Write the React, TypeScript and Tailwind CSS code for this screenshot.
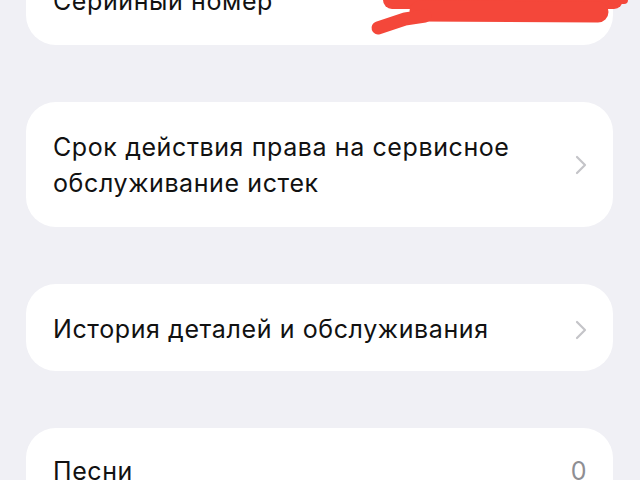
import React from 'react';

const font = { fontFamily: 'Inter, "Noto Sans", sans-serif' };

const Chevron: React.FC = () => (
  <svg width="12" height="20" viewBox="0 0 12 20" className="shrink-0">
    <path d="M2 2 L10 10 L2 18" fill="none" stroke="#c4c4c8" strokeWidth="2.2" strokeLinecap="round" strokeLinejoin="round" />
  </svg>
);

// red marker scribble covering the serial number
const Scribble: React.FC = () => (
  <svg className="absolute left-0 top-0" width="640" height="50" viewBox="0 0 640 50">
    <g fill="none" stroke="#f4473a" strokeLinecap="round" strokeLinejoin="round">
      <path d="M392 0 L614 0" strokeWidth="18" />
      <path d="M612 0 L624 0" strokeWidth="8" />
      <path d="M420 11 L598 12" strokeWidth="21" />
      <path d="M378 28 L405 19 L425 16" strokeWidth="13" />
    </g>
  </svg>
);

export default function App() {
  return (
    <div className="w-[640px] h-[480px] overflow-hidden bg-[#f0f0f5] text-[#111] relative" style={font}>
      <div className="flex flex-col gap-[57px] pl-[26px] pr-[27px] text-[25px] tracking-[0.6px]">
        <div className="-mt-[41px] h-[86px] bg-white rounded-[30px] flex items-center pl-[27px] pr-[26px]">
          <span>Серийный номер</span>
        </div>
        <div className="h-[125px] bg-white rounded-[30px] flex items-center justify-between pl-[27px] pr-[26px] leading-[36px]">
          <span>Срок действия права на сервисное<br />обслуживание истек</span>
          <Chevron />
        </div>
        <div className="h-[87px] bg-white rounded-[30px] flex items-center justify-between pl-[27px] pr-[26px] pt-[4px]">
          <span>История деталей и обслуживания</span>
          <Chevron />
        </div>
        <div className="h-[87px] bg-white rounded-[30px] flex items-center justify-between pl-[27px] pr-[26px]">
          <span>Песни</span>
          <span className="text-[#8e8e93]">0</span>
        </div>
      </div>
      <Scribble />
    </div>
  );
}
